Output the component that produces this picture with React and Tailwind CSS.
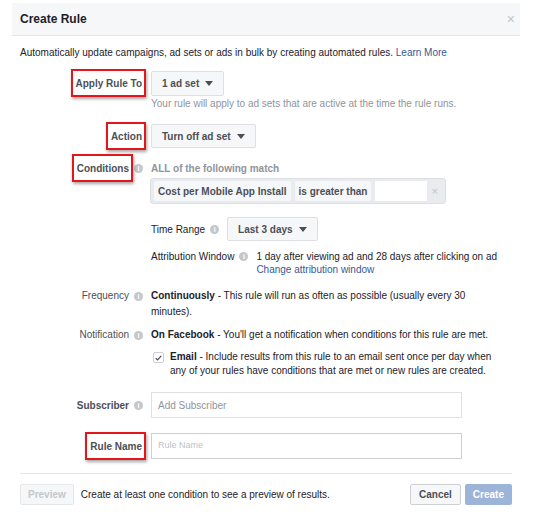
import React from "react";

function Info() {
  return (
    <span className="ml-[5px] inline-flex h-[9px] w-[9px] shrink-0 items-center justify-center rounded-full bg-[#c4c7cc] text-[7px] font-bold leading-none text-white">
      i
    </span>
  );
}

function Highlight({ children }) {
  return (
    <span className="relative inline-block">
      <span className="absolute -left-[5px] -right-[4px] -top-[7px] -bottom-[6px] border-2 border-[#e3161c] bg-white shadow-[1px_2px_3px_rgba(0,0,0,0.35)]" />
      <span className="relative">{children}</span>
    </span>
  );
}

function Label({ children, info, marked }) {
  return (
    <div className="flex w-[123px] shrink-0 items-center justify-end text-[10px] font-bold text-[#4b4f56]">
      {marked ? <Highlight>{children}</Highlight> : <span>{children}</span>}
      {info && <Info />}
      {!info && <span className="w-[1px]" />}
    </div>
  );
}

function Caret() {
  return (
    <svg width="8" height="5" viewBox="0 0 8 5" className="ml-[6px]">
      <path d="M0 0h8L4 5z" fill="#4b4f56" />
    </svg>
  );
}

function Dropdown({ children, className = "" }) {
  return (
    <div
      className={
        "flex items-center rounded-[2px] border border-[#dddfe2] bg-[#f6f7f9] px-[10px] text-[10px] font-bold text-[#4b4f56] " +
        className
      }
    >
      {children}
      <Caret />
    </div>
  );
}

export default function App() {
  return (
    <div
      className="h-[517px] w-[533px] overflow-hidden bg-white text-[10px] text-[#1d2129]"
      style={{ fontFamily: "'Liberation Sans', Arial, sans-serif" }}
    >
      <div className="ml-[12px] mt-[3px] w-[508px]">
        {/* Header */}
        <div className="flex h-[33px] items-center justify-between border-b border-[#e5e5e5] bg-[#f6f7f9] pl-[8px] pr-[5px]">
          <span className="text-[12px] font-bold text-[#1d2129]">Create Rule</span>
          <span className="text-[14px] leading-none text-[#bec2c9]">×</span>
        </div>

        <div className="px-[8px]">
          <p className="mt-[10px] leading-[14px]">
            Automatically update campaigns, ad sets or ads in bulk by creating automated rules.{" "}
            <span className="text-[#365899]">Learn More</span>
          </p>

          {/* Apply Rule To */}
          <div className="mt-[11px] flex items-center">
            <Label marked>Apply Rule To</Label>
            <Dropdown className="ml-[8px] h-[25px]">1 ad set</Dropdown>
          </div>
          <p className="ml-[131px] mt-[1px] leading-[14px] text-[#90949c]">
            Your rule will apply to ad sets that are active at the time the rule runs.
          </p>

          {/* Action */}
          <div className="mt-[13px] flex items-center">
            <Label marked>Action</Label>
            <Dropdown className="ml-[8px] h-[24px]">Turn off ad set</Dropdown>
          </div>

          {/* Conditions */}
          <div className="mt-[13px] flex items-center">
            <Label marked info>Conditions</Label>
            <span className="ml-[8px] font-bold leading-[14px] text-[#90949c]">
              ALL of the following match
            </span>
          </div>
          <div className="ml-[130px] mt-[2px] flex h-[26px] w-[296px] items-center rounded-[3px] border border-[#dddfe2] bg-[#e9ebee] px-[3px]">
            <div className="flex h-[20px] items-center rounded-[2px] bg-[#f6f7f9] px-[4px] font-bold text-[#4b4f56]">
              Cost per Mobile App Install
            </div>
            <div className="ml-[4px] flex h-[20px] items-center rounded-[2px] bg-[#f6f7f9] px-[4px] font-bold text-[#4b4f56]">
              is greater than
            </div>
            <div className="ml-[4px] h-[20px] w-[52px] bg-white" />
            <span className="ml-[4px] text-[11px] leading-none text-[#bec2c9]">×</span>
          </div>

          {/* Time Range */}
          <div className="ml-[131px] mt-[13px] flex items-center">
            <span>Time Range</span>
            <Info />
            <Dropdown className="ml-[8px] h-[24px]">Last 3 days</Dropdown>
          </div>

          {/* Attribution Window */}
          <div className="ml-[131px] mt-[9px] flex items-start leading-[13px]">
            <div className="flex h-[13px] items-center">
              <span>Attribution Window</span>
              <Info />
            </div>
            <div className="ml-[8px]">
              <div>1 day after viewing ad and 28 days after clicking on ad</div>
              <div className="text-[#365899]">Change attribution window</div>
            </div>
          </div>

          {/* Frequency */}
          <div className="mt-[12px] flex items-start leading-[16px]">
            <div className="flex h-[16px] w-[123px] shrink-0 items-center justify-end text-[#4b4f56]">
              <span>Frequency</span>
              <Info />
            </div>
            <div className="ml-[8px] w-[318px]">
              <b>Continuously</b> - This rule will run as often as possible (usually every 30 minutes).
            </div>
          </div>

          {/* Notification */}
          <div className="mt-[8px] flex items-center leading-[14px]">
            <div className="flex w-[123px] shrink-0 items-center justify-end text-[#4b4f56]">
              <span>Notification</span>
              <Info />
            </div>
            <div className="ml-[8px]">
              <b>On Facebook</b> - You'll get a notification when conditions for this rule are met.
            </div>
          </div>

          {/* Email */}
          <div className="ml-[133px] mt-[8px] flex items-start leading-[14px]">
            <div className="mt-[2px] flex h-[11px] w-[11px] shrink-0 items-center justify-center rounded-[2px] border border-[#ccd0d5] bg-white">
              <svg width="7" height="6" viewBox="0 0 7 6">
                <path d="M0.7 3.2 2.6 5 6.3 0.8" fill="none" stroke="#4b4f56" strokeWidth="1.2" />
              </svg>
            </div>
            <div className="ml-[6px] w-[330px]">
              <b>Email</b> - Include results from this rule to an email sent once per day when any of your rules have conditions that are met or new rules are created.
            </div>
          </div>

          {/* Subscriber */}
          <div className="mt-[14px] flex items-center">
            <Label info>Subscriber</Label>
            <div className="ml-[8px] flex h-[26px] w-[311px] items-center border border-[#dddfe2] px-[6px] text-[#90949c]">
              Add Subscriber
            </div>
          </div>

          {/* Rule Name */}
          <div className="mt-[15px] flex items-center">
            <Label marked>Rule Name</Label>
            <div className="ml-[8px] flex h-[26px] w-[311px] items-center border border-[#ccd0d5] px-[6px] text-[9px] text-[#bec2c9]">
              Rule Name
            </div>
          </div>

          {/* Footer */}
          <div className="mt-[14px] border-t border-[#e5e5e5]" />
          <div className="mt-[10px] flex items-center">
            <div className="flex h-[21px] items-center rounded-[2px] border border-[#e5e6e8] bg-[#f6f7f9] px-[7px] font-bold text-[#c4c7cc]">
              Preview
            </div>
            <span className="ml-[7px]">Create at least one condition to see a preview of results.</span>
            <div className="ml-auto flex h-[21px] items-center rounded-[2px] border border-[#ced0d4] bg-[#f6f7f9] px-[8px] font-bold text-[#4b4f56]">
              Cancel
            </div>
            <div className="ml-[4px] flex h-[21px] items-center rounded-[2px] bg-[#9cb4d8] px-[8px] font-bold text-white">
              Create
            </div>
          </div>
        </div>
      </div>
    </div>
  );
}
